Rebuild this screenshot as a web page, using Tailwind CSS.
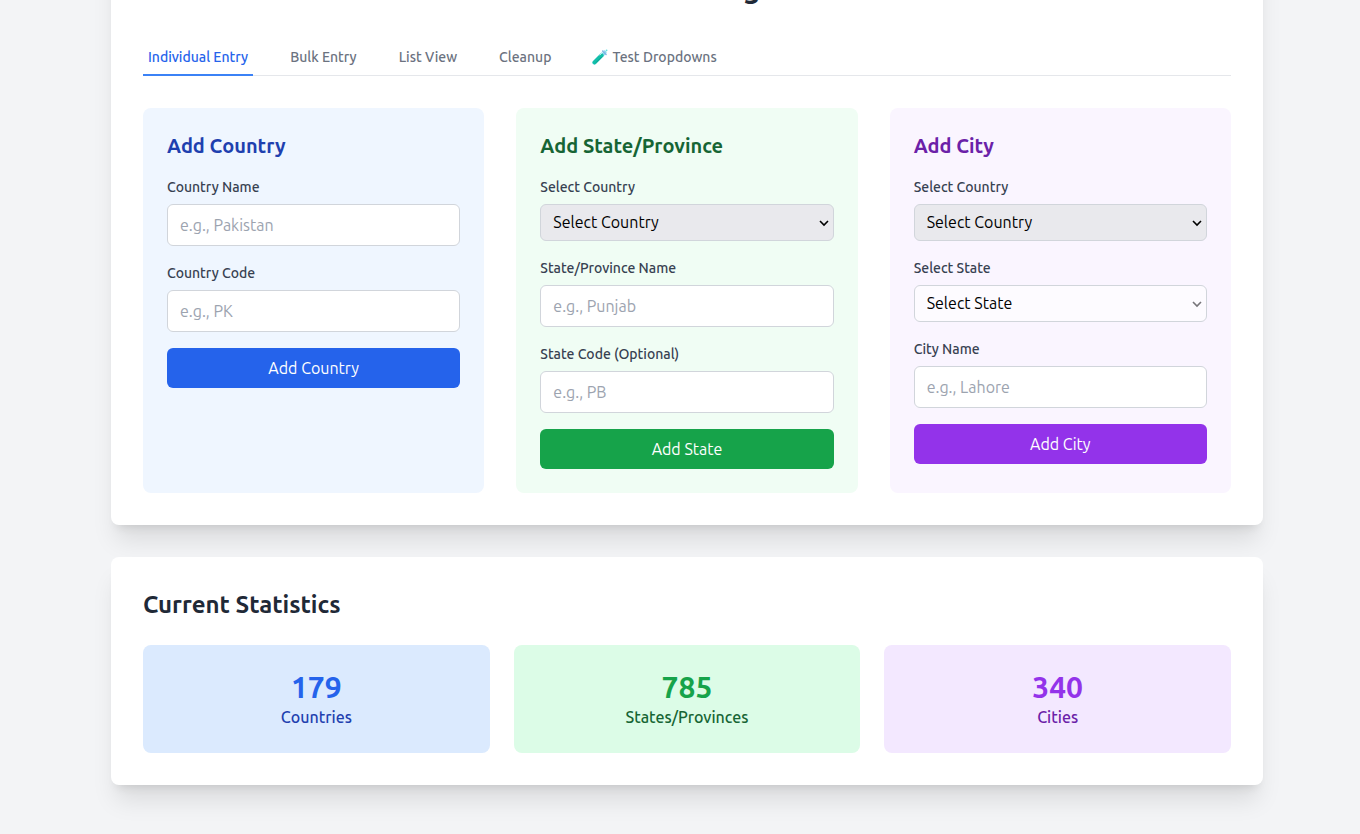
<!DOCTYPE html>
<html lang="en">
<head>
<meta charset="utf-8">
<meta name="viewport" content="width=device-width, initial-scale=1">
<title>Locations Management</title>
<script src="https://cdn.jsdelivr.net/npm/@tailwindcss/browser@4"></script>
</head>
<body class="bg-[#f3f4f6] font-['Ubuntu','Noto_Sans',sans-serif] text-black">
<main class="min-h-screen overflow-hidden pl-[14px]">
  <div class="mx-auto -mt-[62px] max-w-6xl pb-12">
    <section class="rounded-lg bg-white p-8 shadow-xl">
      <h1 class="mb-8 text-center text-3xl font-bold text-[#1f2937]">Locations Management</h1>
      <nav class="mb-8 flex gap-8 border-b border-[#e5e7eb] text-sm font-medium text-[#6b7280]" aria-label="Sections">
        <button type="button" class="-mb-px border-b-2 border-[#3b82f6] px-[5px] pt-[9px] pb-[7px] text-[#2563eb]">Individual Entry</button>
        <button type="button" class="-mb-px border-b-2 border-transparent px-[5px] pt-[9px] pb-[7px]">Bulk Entry</button>
        <button type="button" class="-mb-px border-b-2 border-transparent px-[5px] pt-[9px] pb-[7px]">List View</button>
        <button type="button" class="-mb-px border-b-2 border-transparent px-[5px] pt-[9px] pb-[7px]">Cleanup</button>
        <button type="button" class="-mb-px flex items-center gap-1 border-b-2 border-transparent px-1 pt-[9px] pb-[7px]">
          <svg class="size-4" viewBox="0 0 16 16" fill="none" aria-hidden="true">
            <path d="M2.4 13.6 12.4 3.6" stroke="#8fdcec" stroke-width="4.2" stroke-linecap="round"/>
            <path d="M2.6 13.4 9.6 6.4" stroke="#12bfa8" stroke-width="4" stroke-linecap="round"/>
            <path d="M4 13.6 9.8 7.8" stroke="#0b9f90" stroke-width="1"/>
            <path d="M10.6 1.9 14.1 5.4" stroke="#7fb2e6" stroke-width="1.4" stroke-linecap="round"/>
            <path d="M7.5 6.3 11 2.8" stroke="#d5f4fa" stroke-width="1"/>
            <circle cx="14.6" cy="1.3" r=".9" fill="#66dfe0"/>
          </svg>
          Test Dropdowns
        </button>
      </nav>

      <div class="grid grid-cols-3 gap-8">
        <form class="rounded-lg bg-[#eff6ff] p-6">
          <h2 class="mb-4 text-xl font-bold text-[#1e40af]">Add Country</h2>
          <div class="flex flex-col gap-4">
            <div>
              <label for="country-name" class="mb-[7px] block pt-px text-sm font-medium text-[#374151]">Country Name</label>
              <input id="country-name" type="text" placeholder="e.g., Pakistan" class="block w-full rounded-md border border-[#d1d5db] bg-white px-3 py-2 placeholder:text-[#9ca3af]">
            </div>
            <div>
              <label for="country-code" class="mb-[7px] block pt-px text-sm font-medium text-[#374151]">Country Code</label>
              <input id="country-code" type="text" placeholder="e.g., PK" class="block w-full rounded-md border border-[#d1d5db] bg-white px-3 py-2 placeholder:text-[#9ca3af]">
            </div>
            <button type="button" class="w-full rounded-md bg-[#2563eb] px-4 py-2 text-white">Add Country</button>
          </div>
        </form>

        <form class="rounded-lg bg-[#f0fdf4] p-6">
          <h2 class="mb-4 text-xl font-bold text-[#166534]">Add State/Province</h2>
          <div class="flex flex-col gap-4">
            <div>
              <label for="state-country" class="mb-[7px] block pt-px text-sm font-medium text-[#374151]">Select Country</label>
              <div class="relative">
                <select id="state-country" class="block h-[37px] w-full appearance-none rounded-md border border-[#d1d5db] bg-[#e9e9ed] px-3 pb-0.5"><option>Select Country</option></select>
                <svg class="pointer-events-none absolute top-[15px] right-[5px] h-2 w-[10px]" viewBox="0 0 10 8" fill="none" stroke="#000" stroke-width="1.6" aria-hidden="true"><path d="m1 2 4 4 4-4"/></svg>
              </div>
            </div>
            <div>
              <label for="state-name" class="mb-[7px] block pt-px text-sm font-medium text-[#374151]">State/Province Name</label>
              <input id="state-name" type="text" placeholder="e.g., Punjab" class="block w-full rounded-md border border-[#d1d5db] bg-white px-3 py-2 placeholder:text-[#9ca3af]">
            </div>
            <div>
              <label for="state-code" class="mb-[7px] block pt-px text-sm font-medium text-[#374151]">State Code (Optional)</label>
              <input id="state-code" type="text" placeholder="e.g., PB" class="block w-full rounded-md border border-[#d1d5db] bg-white px-3 py-2 placeholder:text-[#9ca3af]">
            </div>
            <button type="button" class="w-full rounded-md bg-[#16a34a] px-4 py-2 text-white">Add State</button>
          </div>
        </form>

        <form class="rounded-lg bg-[#faf5ff] p-6">
          <h2 class="mb-4 text-xl font-bold text-[#6b21a8]">Add City</h2>
          <div class="flex flex-col gap-4">
            <div>
              <label for="city-country" class="mb-[7px] block pt-px text-sm font-medium text-[#374151]">Select Country</label>
              <div class="relative">
                <select id="city-country" class="block h-[37px] w-full appearance-none rounded-md border border-[#d1d5db] bg-[#e9e9ed] px-3 pb-0.5"><option>Select Country</option></select>
                <svg class="pointer-events-none absolute top-[15px] right-[5px] h-2 w-[10px]" viewBox="0 0 10 8" fill="none" stroke="#000" stroke-width="1.6" aria-hidden="true"><path d="m1 2 4 4 4-4"/></svg>
              </div>
            </div>
            <div>
              <label for="city-state" class="mb-[7px] block pt-px text-sm font-medium text-[#374151]">Select State</label>
              <div class="relative">
                <select id="city-state" disabled class="block h-[37px] w-full appearance-none rounded-md border border-[#d1d5db] bg-[#fdfbff] px-3 pb-0.5 text-black opacity-100"><option>Select State</option></select>
                <svg class="pointer-events-none absolute top-[15px] right-[5px] h-2 w-[10px]" viewBox="0 0 10 8" fill="none" stroke="#77757a" stroke-width="1.6" aria-hidden="true"><path d="m1 2 4 4 4-4"/></svg>
              </div>
            </div>
            <div>
              <label for="city-name" class="mb-[7px] block pt-px text-sm font-medium text-[#374151]">City Name</label>
              <input id="city-name" type="text" placeholder="e.g., Lahore" class="block w-full rounded-md border border-[#d1d5db] bg-white px-3 py-2 placeholder:text-[#9ca3af]">
            </div>
            <button type="button" class="w-full rounded-md bg-[#9333ea] px-4 py-2 text-white">Add City</button>
          </div>
        </form>
      </div>
    </section>

    <section class="mt-8 rounded-lg bg-white p-8 shadow-xl">
      <h2 class="mb-6 text-2xl font-bold text-[#1f2937]">Current Statistics</h2>
      <div class="grid grid-cols-3 gap-6 text-center">
        <div class="rounded-lg bg-[#dbeafe] p-6">
          <div class="text-3xl font-bold text-[#2563eb]">179</div>
          <div class="font-medium text-[#1e40af]">Countries</div>
        </div>
        <div class="rounded-lg bg-[#dcfce7] p-6">
          <div class="text-3xl font-bold text-[#16a34a]">785</div>
          <div class="font-medium text-[#166534]">States/Provinces</div>
        </div>
        <div class="rounded-lg bg-[#f3e8ff] p-6">
          <div class="text-3xl font-bold text-[#9333ea]">340</div>
          <div class="font-medium text-[#6b21a8]">Cities</div>
        </div>
      </div>
    </section>
  </div>
</main>
</body>
</html>
